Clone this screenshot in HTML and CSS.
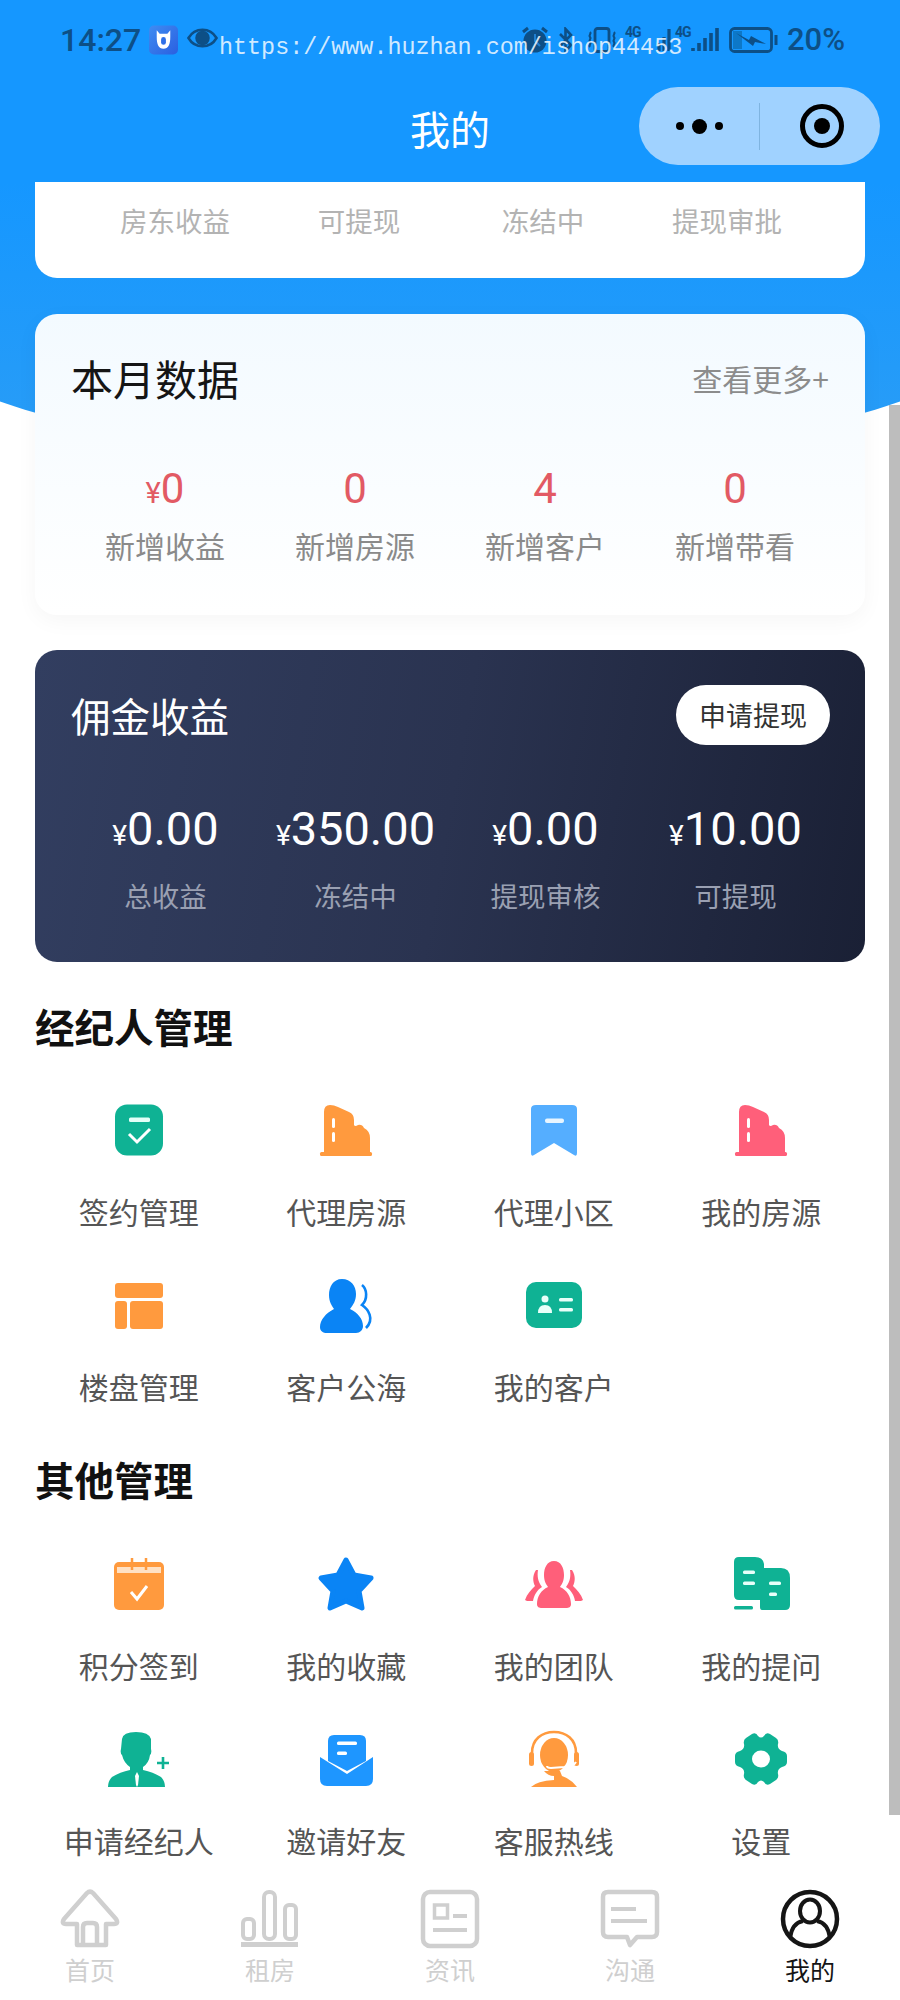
FILE: index.html
```html
<!DOCTYPE html>
<html lang="zh-CN">
<head>
<meta charset="utf-8">
<title>我的</title>
<link rel="stylesheet" href="styles.css">
</head>
<body>
<div class="phone">
  <header class="topbar">
    <div class="status">
      <div class="status-side">
        <span class="clock">14:27</span>
        <svg class="st-app" viewBox="0 0 30 30"><defs><linearGradient id="appg" x1="0" y1="0" x2="1" y2="1"><stop offset="0" stop-color="#3f8cf2"/><stop offset="1" stop-color="#2a5fe0"/></linearGradient></defs><rect width="30" height="30" rx="5" fill="url(#appg)"/><path d="M8 5l3 3.500h8l3-3.500v7c0 8-2 12-7 12s-7-4-7-12z" fill="#fff"/><rect x="12.500" y="12" width="5" height="8" rx="2.500" fill="#2f6fe8"/></svg>
        <svg class="st-eye" viewBox="0 0 32 20"><path d="M1.500 10C5 4 10 1.500 16 1.500S27 4 30.500 10C27 16 22 18.500 16 18.500S5 16 1.500 10z" fill="none" stroke="#0d4f86" stroke-width="2.600"/><circle cx="16" cy="10" r="7.500" fill="#0d4f86"/></svg>
      </div>
      <div class="status-side">
        <svg class="st-alarm" viewBox="0 0 28 28"><circle cx="14" cy="15" r="11.500" fill="#0d4f86"/><path d="M2 6l5-4M26 6l-5-4" stroke="#0d4f86" stroke-width="3"/><path d="M14 8v7l5 5" stroke="#1f7fd0" stroke-width="2" fill="none"/></svg>
        <svg class="st-bt" viewBox="0 0 14 26"><path d="M1 7l11 11-5.500 6V2L12 8 1 19" fill="none" stroke="#0d4f86" stroke-width="2.600"/></svg>
        <svg class="st-vib" viewBox="0 0 30 26"><rect x="8" y="1.500" width="14" height="23" rx="2.500" fill="none" stroke="#0d4f86" stroke-width="2.800"/><path d="M3 5c2 2-2 3 0 5s-2 3 0 5 -2 3 0 5M27 5c2 2-2 3 0 5s-2 3 0 5-2 3 0 5" fill="none" stroke="#0d4f86" stroke-width="2.200"/></svg>
        <span class="st-net">4G</span>
        <svg class="st-sig1" viewBox="0 0 14 26"><path d="M2 16v8M7 10v14M12 2v22" stroke="#0d4f86" stroke-width="3.200"/></svg>
        <span class="st-net">4G</span>
        <svg class="st-sig2" viewBox="0 0 28 26"><path d="M2 21v3M8 16v8M14 11v13M20 6v18M26 1v23" stroke="#0d4f86" stroke-width="3.600"/></svg>
        <svg class="st-bat" viewBox="0 0 50 26"><rect x="1.500" y="1.500" width="41" height="23" rx="4" fill="none" stroke="#0d4f86" stroke-width="2.800"/><rect x="4" y="4" width="9" height="18" fill="#0d78c8"/><path d="M47 8v10" stroke="#0d4f86" stroke-width="3"/><path d="M7 6l13 7 2-4 15 8-11-2-2 4z" fill="#0d4f86"/></svg>
        <span class="battery">20%</span>
      </div>
      <span class="watermark">https://www.huzhan.com/ishop44453</span>
    </div>
    <div class="navbar">
      <h1 class="nav-title">我的</h1>
      <div class="capsule">
        <div class="capsule-dots"><i class="dot"></i><i class="dot dot-big"></i><i class="dot"></i></div>
        <i class="capsule-line"></i>
        <div class="capsule-target"><i class="target-core"></i></div>
      </div>
    </div>
  </header>

  <main class="scroll">
    <section class="card card-income">
      <span class="col">房东收益</span>
      <span class="col">可提现</span>
      <span class="col">冻结中</span>
      <span class="col">提现审批</span>
    </section>

    <section class="card card-month">
      <div class="card-head">
        <h2 class="card-title">本月数据</h2>
        <span class="more">查看更多+</span>
      </div>
      <div class="stats">
        <div class="stat"><b class="stat-value"><small>¥</small>0</b><span class="stat-label">新增收益</span></div>
        <div class="stat"><b class="stat-value">0</b><span class="stat-label">新增房源</span></div>
        <div class="stat"><b class="stat-value">4</b><span class="stat-label">新增客户</span></div>
        <div class="stat"><b class="stat-value">0</b><span class="stat-label">新增带看</span></div>
      </div>
    </section>

    <section class="card card-money">
      <div class="card-head">
        <h2 class="money-title">佣金收益</h2>
        <span class="withdraw">申请提现</span>
      </div>
      <div class="money-stats">
        <div class="stat"><b class="money-value"><small>¥</small>0.00</b><span class="money-label">总收益</span></div>
        <div class="stat"><b class="money-value"><small>¥</small>350.00</b><span class="money-label">冻结中</span></div>
        <div class="stat"><b class="money-value"><small>¥</small>0.00</b><span class="money-label">提现审核</span></div>
        <div class="stat"><b class="money-value"><small>¥</small>10.00</b><span class="money-label">可提现</span></div>
      </div>
    </section>

    <h2 class="section-title first">经纪人管理</h2>
    <div class="grid">
      <div class="item">
        <svg class="icon" viewBox="0 0 60 60"><rect x="6" y="4.500" width="48" height="51" rx="12" fill="#0fb294"/><rect x="20" y="17.500" width="21" height="4.500" rx="1.500" fill="#e4fff8"/><path d="M20 34l8 8 13-13" fill="none" stroke="#fff" stroke-width="3"/></svg>
        <span class="item-label">签约管理</span>
      </div>
      <div class="item">
        <svg class="icon" viewBox="0 0 60 60"><path d="M8 53V12Q8 5 14 5Q18 5 22 7L33 12Q38 14 38 20V25Q39 27 42 25Q46 24 48 28Q54 31 54 38V53Z" fill="#ff9a3e"/><rect x="4" y="52" width="52" height="4" rx="1.500" fill="#ff9a3e"/><rect x="16" y="18" width="3" height="10" rx="1.500" fill="#fff"/><rect x="16" y="32" width="3" height="10" rx="1.500" fill="#fff"/></svg>
        <span class="item-label">代理房源</span>
      </div>
      <div class="item">
        <svg class="icon" viewBox="0 0 60 60"><path d="M7 9Q7 5 12 5H48Q53 5 53 9V53Q53 57 50 55L30 43L10 55Q7 57 7 53Z" fill="#55aeff"/><rect x="21" y="18.500" width="19" height="4.500" rx="2" fill="#e8f5ff"/></svg>
        <span class="item-label">代理小区</span>
      </div>
      <div class="item">
        <svg class="icon" viewBox="0 0 60 60"><path d="M8 53V12Q8 5 14 5Q18 5 22 7L33 12Q38 14 38 20V25Q39 27 42 25Q46 24 48 28Q54 31 54 38V53Z" fill="#ff5f7a"/><rect x="4" y="52" width="52" height="4" rx="1.500" fill="#ff5f7a"/><rect x="16" y="18" width="3" height="10" rx="1.500" fill="#fff"/><rect x="16" y="32" width="3" height="10" rx="1.500" fill="#fff"/></svg>
        <span class="item-label">我的房源</span>
      </div>
      <div class="item">
        <svg class="icon" viewBox="0 0 60 60"><rect x="6" y="8" width="48" height="15" rx="3" fill="#ff9a3e"/><rect x="6" y="26" width="12" height="28" rx="3" fill="#ff9a3e"/><rect x="21" y="26" width="33" height="28" rx="3" fill="#ff9a3e"/></svg>
        <span class="item-label">楼盘管理</span>
      </div>
      <div class="item">
        <svg class="icon" viewBox="0 0 60 60"><path d="M26 4C17 4 13 12 13 20C13 27 16 31 18 34C10 38 4 45 4 52C4 56 7 58 11 58H40C44 58 47 55 47 51C47 44 42 38 34 34C37 30 40 26 40 19C40 11 35 4 26 4Z" fill="#0a84f5"/><path d="M46 10C51 14 52 24 46 30C52 34 59 44 50 53" fill="none" stroke="#0a84f5" stroke-width="2.600"/></svg>
        <span class="item-label">客户公海</span>
      </div>
      <div class="item">
        <svg class="icon" viewBox="0 0 60 60"><rect x="2" y="7" width="56" height="46" rx="10" fill="#0fb294"/><circle cx="21" cy="24" r="3.500" fill="#e8fff9"/><path d="M14 38Q14 30 21 30Q28 30 28 38Z" fill="#e8fff9"/><rect x="35" y="23" width="14" height="3.500" rx="1.500" fill="#e8fff9"/><rect x="35" y="33" width="14" height="3.500" rx="1.500" fill="#e8fff9"/></svg>
        <span class="item-label">我的客户</span>
      </div>
    </div>

    <h2 class="section-title">其他管理</h2>
    <div class="grid grid-other">
      <div class="item">
        <svg class="icon" viewBox="0 0 60 60"><rect x="5" y="8" width="50" height="48" rx="5" fill="#ff9a3e"/><rect x="8" y="13" width="44" height="6" fill="#ffe1c4"/><path d="M23 4v12M37 4v12" stroke="#ff9a3e" stroke-width="2.500"/><path d="M22 38l6 7 10-13" fill="none" stroke="#fff" stroke-width="3"/></svg>
        <span class="item-label">积分签到</span>
      </div>
      <div class="item">
        <svg class="icon" viewBox="0 0 60 60"><path d="M30 6L38 21L55 24L43 37L46 54L30 47L14 54L17 37L5 24L22 21Z" fill="#0a84f5" stroke="#0a84f5" stroke-width="5" stroke-linejoin="round"/></svg>
        <span class="item-label">我的收藏</span>
      </div>
      <div class="item">
        <svg class="icon" viewBox="0 0 60 60"><path d="M30 7C23 7 20 14 20 21C20 27 22 30 24 33C17 36 13 43 13 50C13 53 15 54 18 54H42C45 54 47 53 47 50C47 43 43 36 36 33C38 30 40 27 40 21C40 14 37 7 30 7Z" fill="#ff5f7a"/><path d="M12 16C8 22 9 28 11 32C7 36 3 40 1 46L3 47H9C10 41 13 36 18 33C14 28 13 22 14 16Z" fill="#ff5f7a"/><path d="M48 16C52 22 51 28 49 32C53 36 57 40 59 46L57 47H51C50 41 47 36 42 33C46 28 47 22 46 16Z" fill="#ff5f7a"/></svg>
        <span class="item-label">我的团队</span>
      </div>
      <div class="item">
        <svg class="icon" viewBox="0 0 60 60"><path d="M3 8Q3 3 8 3H24Q32 3 33 10V14H50Q59 14 59 24V51Q59 56 54 56H31Q29 56 29 53V46H8Q3 46 3 41Z" fill="#0fb294"/><rect x="3" y="52" width="19" height="3.500" rx="1.500" fill="#0fb294"/><rect x="12" y="16.500" width="12" height="3.500" rx="1.500" fill="#e8fff9"/><rect x="12" y="27.500" width="12" height="3.500" rx="1.500" fill="#e8fff9"/><rect x="38" y="27.500" width="12" height="3.500" rx="1.500" fill="#e8fff9"/><rect x="38" y="38.500" width="8" height="3.500" rx="1.500" fill="#e8fff9"/></svg>
        <span class="item-label">我的提问</span>
      </div>
      <div class="item">
        <svg class="icon" viewBox="0 0 60 60"><path d="M13 10Q14 3 27 3Q40 3 42 10V20Q43 24 41 26Q40 34 34 38V41Q44 43 52 48Q56 52 56 58H-1Q-1 52 3 48Q11 43 21 41V38Q15 34 13 26Q11 24 12 20Z" fill="#0fb294"/><path d="M28 43L30 47L29 56L28 58L27 56L26 47Z" fill="#fff"/><path d="M54 28v12M48 34h12" stroke="#0fb294" stroke-width="2.600"/></svg>
        <span class="item-label">申请经纪人</span>
      </div>
      <div class="item">
        <svg class="icon" viewBox="0 0 60 60"><path d="M12 12Q12 6 18 6H44Q50 6 50 12V32L31 42L12 32Z" fill="#1e96ff"/><path d="M4 28L31 45L57 28V50Q57 57 50 57H11Q4 57 4 50Z" fill="#1e96ff"/><rect x="21" y="12.500" width="20" height="3.500" rx="1.500" fill="#fff"/><rect x="21" y="22.500" width="10" height="3.500" rx="1.500" fill="#fff"/></svg>
        <span class="item-label">邀请好友</span>
      </div>
      <div class="item">
        <svg class="icon" viewBox="0 0 60 60"><path d="M8 34V24C8 10 18 3 30 3S52 10 52 24V34" fill="none" stroke="#ff9a3e" stroke-width="2.600"/><rect x="5" y="23" width="5" height="14" rx="2.500" fill="#ff9a3e"/><rect x="50" y="23" width="5" height="14" rx="2.500" fill="#ff9a3e"/><ellipse cx="30" cy="26" rx="14" ry="17" fill="#ff9a3e"/><path d="M20 42Q24 47 30 47V51Q13 52 7 58H53Q47 50 38 47L36 42Z" fill="#ff9a3e"/><path d="M52 33Q50 37 40 38L27 39Q23 39 23 37" fill="none" stroke="#fff" stroke-width="2"/></svg>
        <span class="item-label">客服热线</span>
      </div>
      <div class="item">
        <svg class="icon" viewBox="0 0 60 60"><path d="M21 5Q25 3 27 7Q30 10 33 7Q35 3 39 5L45 9Q48 11 47 15Q46 20 51 22Q56 23 56 27V33Q56 37 51 38Q46 40 47 45Q48 49 45 51L39 55Q35 57 33 53Q30 50 27 53Q25 57 21 55L15 51Q12 49 13 45Q14 40 9 38Q4 37 4 33V27Q4 23 9 22Q14 20 13 15Q12 11 15 9Z" fill="#0fb294"/><ellipse cx="30" cy="30" rx="9" ry="8.500" fill="#fff"/></svg>
        <span class="item-label">设置</span>
      </div>
    </div>
    <i class="scrollbar"></i>
  </main>

  <nav class="tabbar">
    <div class="tab">
      <svg class="tab-icon" viewBox="0 0 60 60"><path d="M17 56V35H6Q1 35 4 30L27 4Q30 1 33 4L56 30Q59 35 54 35H46V56ZM23 56V38Q23 34 27 34H33Q37 34 37 38V56" fill="none" stroke="#cfcfcf" stroke-width="4.500" stroke-linejoin="round"/></svg>
      <span class="tab-label">首页</span>
    </div>
    <div class="tab">
      <svg class="tab-icon" viewBox="0 0 60 60"><g fill="none" stroke="#cfcfcf" stroke-width="4"><rect x="3" y="30" width="11" height="20" rx="4"/><rect x="24" y="3" width="11" height="47" rx="5"/><rect x="45" y="16" width="11" height="34" rx="4"/></g><rect x="1" y="53" width="57" height="5" fill="#cfcfcf"/></svg>
      <span class="tab-label">租房</span>
    </div>
    <div class="tab">
      <svg class="tab-icon" viewBox="0 0 60 60"><rect x="3" y="3" width="54" height="54" rx="7" fill="none" stroke="#cfcfcf" stroke-width="4.500"/><rect x="14.500" y="16" width="13" height="13" fill="none" stroke="#cfcfcf" stroke-width="3.500"/><path d="M33 27H47M13 41H47" stroke="#cfcfcf" stroke-width="4"/></svg>
      <span class="tab-label">资讯</span>
    </div>
    <div class="tab">
      <svg class="tab-icon" viewBox="0 0 60 60"><path d="M8 3H52Q57 3 57 8V43Q57 48 52 48H37L30 56L27 48H8Q3 48 3 43V8Q3 3 8 3Z" fill="none" stroke="#cfcfcf" stroke-width="4.500" stroke-linejoin="round"/><path d="M11 20H36M11 32H47" stroke="#cfcfcf" stroke-width="4"/></svg>
      <span class="tab-label">沟通</span>
    </div>
    <div class="tab active">
      <svg class="tab-icon" viewBox="0 0 60 60"><circle cx="30" cy="30" r="27" fill="none" stroke="#151515" stroke-width="4.500"/><ellipse cx="30" cy="22" rx="10" ry="11.500" fill="none" stroke="#151515" stroke-width="4"/><path d="M10 49Q12 34 23 32M50 49Q48 34 37 32" fill="none" stroke="#151515" stroke-width="4"/></svg>
      <span class="tab-label">我的</span>
    </div>
  </nav>
</div>
</body>
</html>
```

FILE: styles.css
```css
* { box-sizing: border-box; }
html, body { margin: 0; padding: 0; }
body {
  font-family: "Noto Sans CJK SC", "Noto Sans", sans-serif;
  background: #fff;
}
h1, h2 { margin: 0; font-weight: 400; }
small { font-size: inherit; line-height: 1; }

.phone {
  width: 900px;
  height: 2000px;
  display: flex;
  flex-direction: column;
  overflow: hidden;
  background: #fff;
}

/* top bar */
.topbar { height: 182px; flex: none; background: #1597ff; display: flex; flex-direction: column; }
.status {
  position: relative;
  height: 80px;
  padding: 26px 55px 0 60px;
  display: flex;
  justify-content: space-between;
  align-items: flex-start;
  color: #0d4f86;
}
.status-side { display: flex; align-items: center; height: 28px; }
.clock { font-family: Roboto, sans-serif; font-size: 32px; font-weight: 500; line-height: 28px; margin-right: 8px; }
.st-app { width: 29px; height: 30px; margin-right: 9px; }
.st-eye { width: 31px; height: 20px; margin-top: -4px; }
.st-alarm { width: 28px; height: 28px; margin-right: 10px; }
.st-bt { width: 14px; height: 26px; margin-right: 14px; }
.st-vib { width: 30px; height: 26px; margin-right: 8px; }
.st-net { font-family: Roboto, sans-serif; font-size: 14px; font-weight: 700; letter-spacing: -1px; line-height: 12px; align-self: flex-start; width: 16px; }
.st-sig1 { width: 14px; height: 26px; margin: 0 4px 0 16px; }
.st-sig2 { width: 28px; height: 26px; margin-right: 10px; }
.st-bat { width: 50px; height: 26px; margin-right: 8px; }
.battery { font-family: Roboto, sans-serif; font-size: 31px; font-weight: 500; line-height: 28px; }
.watermark {
  position: absolute;
  left: 219px;
  top: 35px;
  font-family: "Liberation Mono", monospace;
  font-size: 23.400px;
  line-height: 26px;
  color: rgba(235, 246, 255, .88);
  white-space: nowrap;
}
.navbar { position: relative; flex: 1; display: flex; align-items: flex-start; justify-content: center; padding-top: 23px; }
.nav-title { font-size: 40px; line-height: 50px; color: #fff; }
.capsule {
  position: absolute;
  left: 639px;
  top: 7px;
  width: 241px;
  height: 78px;
  border-radius: 39px;
  background: #a0d2ff;
  display: flex;
  align-items: center;
}
.capsule-dots { width: 120px; display: flex; justify-content: center; align-items: center; gap: 4px; }
.dot { width: 8px; height: 8px; border-radius: 50%; background: #000; margin: 0 2px; }
.dot-big { width: 15px; height: 15px; }
.capsule-line { width: 1px; height: 47px; background: #7fb4e0; }
.capsule-target {
  width: 44px;
  height: 44px;
  margin-left: 40px;
  border: 5px solid #000;
  border-radius: 50%;
  display: flex;
  align-items: center;
  justify-content: center;
}
.target-core { width: 16px; height: 16px; border-radius: 50%; background: #000; }

/* scroll area */
.scroll { position: relative; flex: 1; overflow: hidden; padding: 0 35px; min-height: 0; }
.scroll::before {
  content: "";
  position: absolute;
  left: -100px;
  top: 0;
  width: 1100px;
  height: 277px;
  border-radius: 0 0 550px 550px / 0 0 135px 135px;
  background: linear-gradient(180deg, #1597ff 0%, #2a9df6 100%);
}
.scrollbar { position: absolute; right: 0; top: 223px; width: 11px; height: 1410px; background: #bdbdbd; }

.card { position: relative; border-radius: 0 0 22px 22px; }
.card-income {
  height: 96px;
  background: #fff;
  padding: 18px 48px 0;
  display: grid;
  grid-template-columns: repeat(4, 184px);
  align-content: start;
  justify-items: center;
  font-size: 27.500px;
  line-height: 40px;
  color: #b3b3b3;
}
.card-month {
  margin-top: 36px;
  height: 301px;
  border-radius: 22px;
  padding: 34px 36px 0;
  background: linear-gradient(180deg, #f3faff 0%, #fff 100%);
  box-shadow: 0 6px 22px rgba(0, 0, 0, .04);
}
.card-head { display: flex; justify-content: space-between; align-items: center; height: 60px; }
.card-title { font-size: 42px; line-height: 60px; color: #151515; }
.more { font-size: 30px; line-height: 60px; color: #8c8c8c; }

.stats, .money-stats {
  display: grid;
  grid-template-columns: repeat(4, 190px);
  justify-content: center;
}
.stats { margin: 58px -36px 0; }
.stat { display: flex; flex-direction: column; align-items: center; }
.stat-value { font-family: Roboto, sans-serif; font-weight: 400; font-size: 42px; line-height: 46px; color: #e25a64; }
.stat-value small { font-size: 29px; }
.stat-label { margin-top: 11px; font-size: 30px; line-height: 44px; color: #8a8a8a; }

.card-money {
  margin-top: 35px;
  height: 312px;
  border-radius: 22px;
  padding: 35px 35px 0 36px;
  background: linear-gradient(100deg, #323e60 0%, #2a3350 50%, #1a2035 100%);
}
.money-title { font-size: 39.500px; line-height: 58px; color: #fff; }
.withdraw {
  width: 154px;
  height: 60px;
  border-radius: 30px;
  background: #fff;
  color: #333;
  font-size: 27px;
  line-height: 60px;
  text-align: center;
}
.money-stats { margin: 56px -36px 0 -36px; }
.money-value { font-family: Roboto, sans-serif; font-weight: 400; font-size: 47px; line-height: 56px; color: #fff; }
.money-value small { font-size: 28px; }
.money-label { margin-top: 18px; font-size: 27.500px; line-height: 40px; color: #9aa0b2; }

.section-title { position: relative; font-size: 39.500px; font-weight: 700; line-height: 56px; color: #111; margin-top: 41px; }
.section-title.first { margin-top: 36px; }
.grid {
  position: relative;
  margin-top: 46px;
  display: grid;
  grid-template-columns: repeat(4, 207.500px);
  row-gap: 40px;
}
.grid-other { margin-top: 47px; }
.item { display: flex; flex-direction: column; align-items: center; height: 135px; }
.icon { width: 60px; height: 60px; overflow: visible; flex: none; }
.item-label { margin-top: 29px; font-size: 30px; line-height: 44px; color: #555; white-space: nowrap; }

/* tab bar */
.tabbar { position: relative; flex: none; height: 135px; padding-top: 24px; background: #fff; display: grid; grid-template-columns: repeat(5, 180px); }
.tab { display: flex; flex-direction: column; align-items: center; }
.tab-icon { width: 60px; height: 60px; flex: none; }
.tab-label { margin-top: 2px; font-size: 25px; line-height: 36px; color: #cfcfcf; }
.tab.active .tab-label { color: #151515; }
```
